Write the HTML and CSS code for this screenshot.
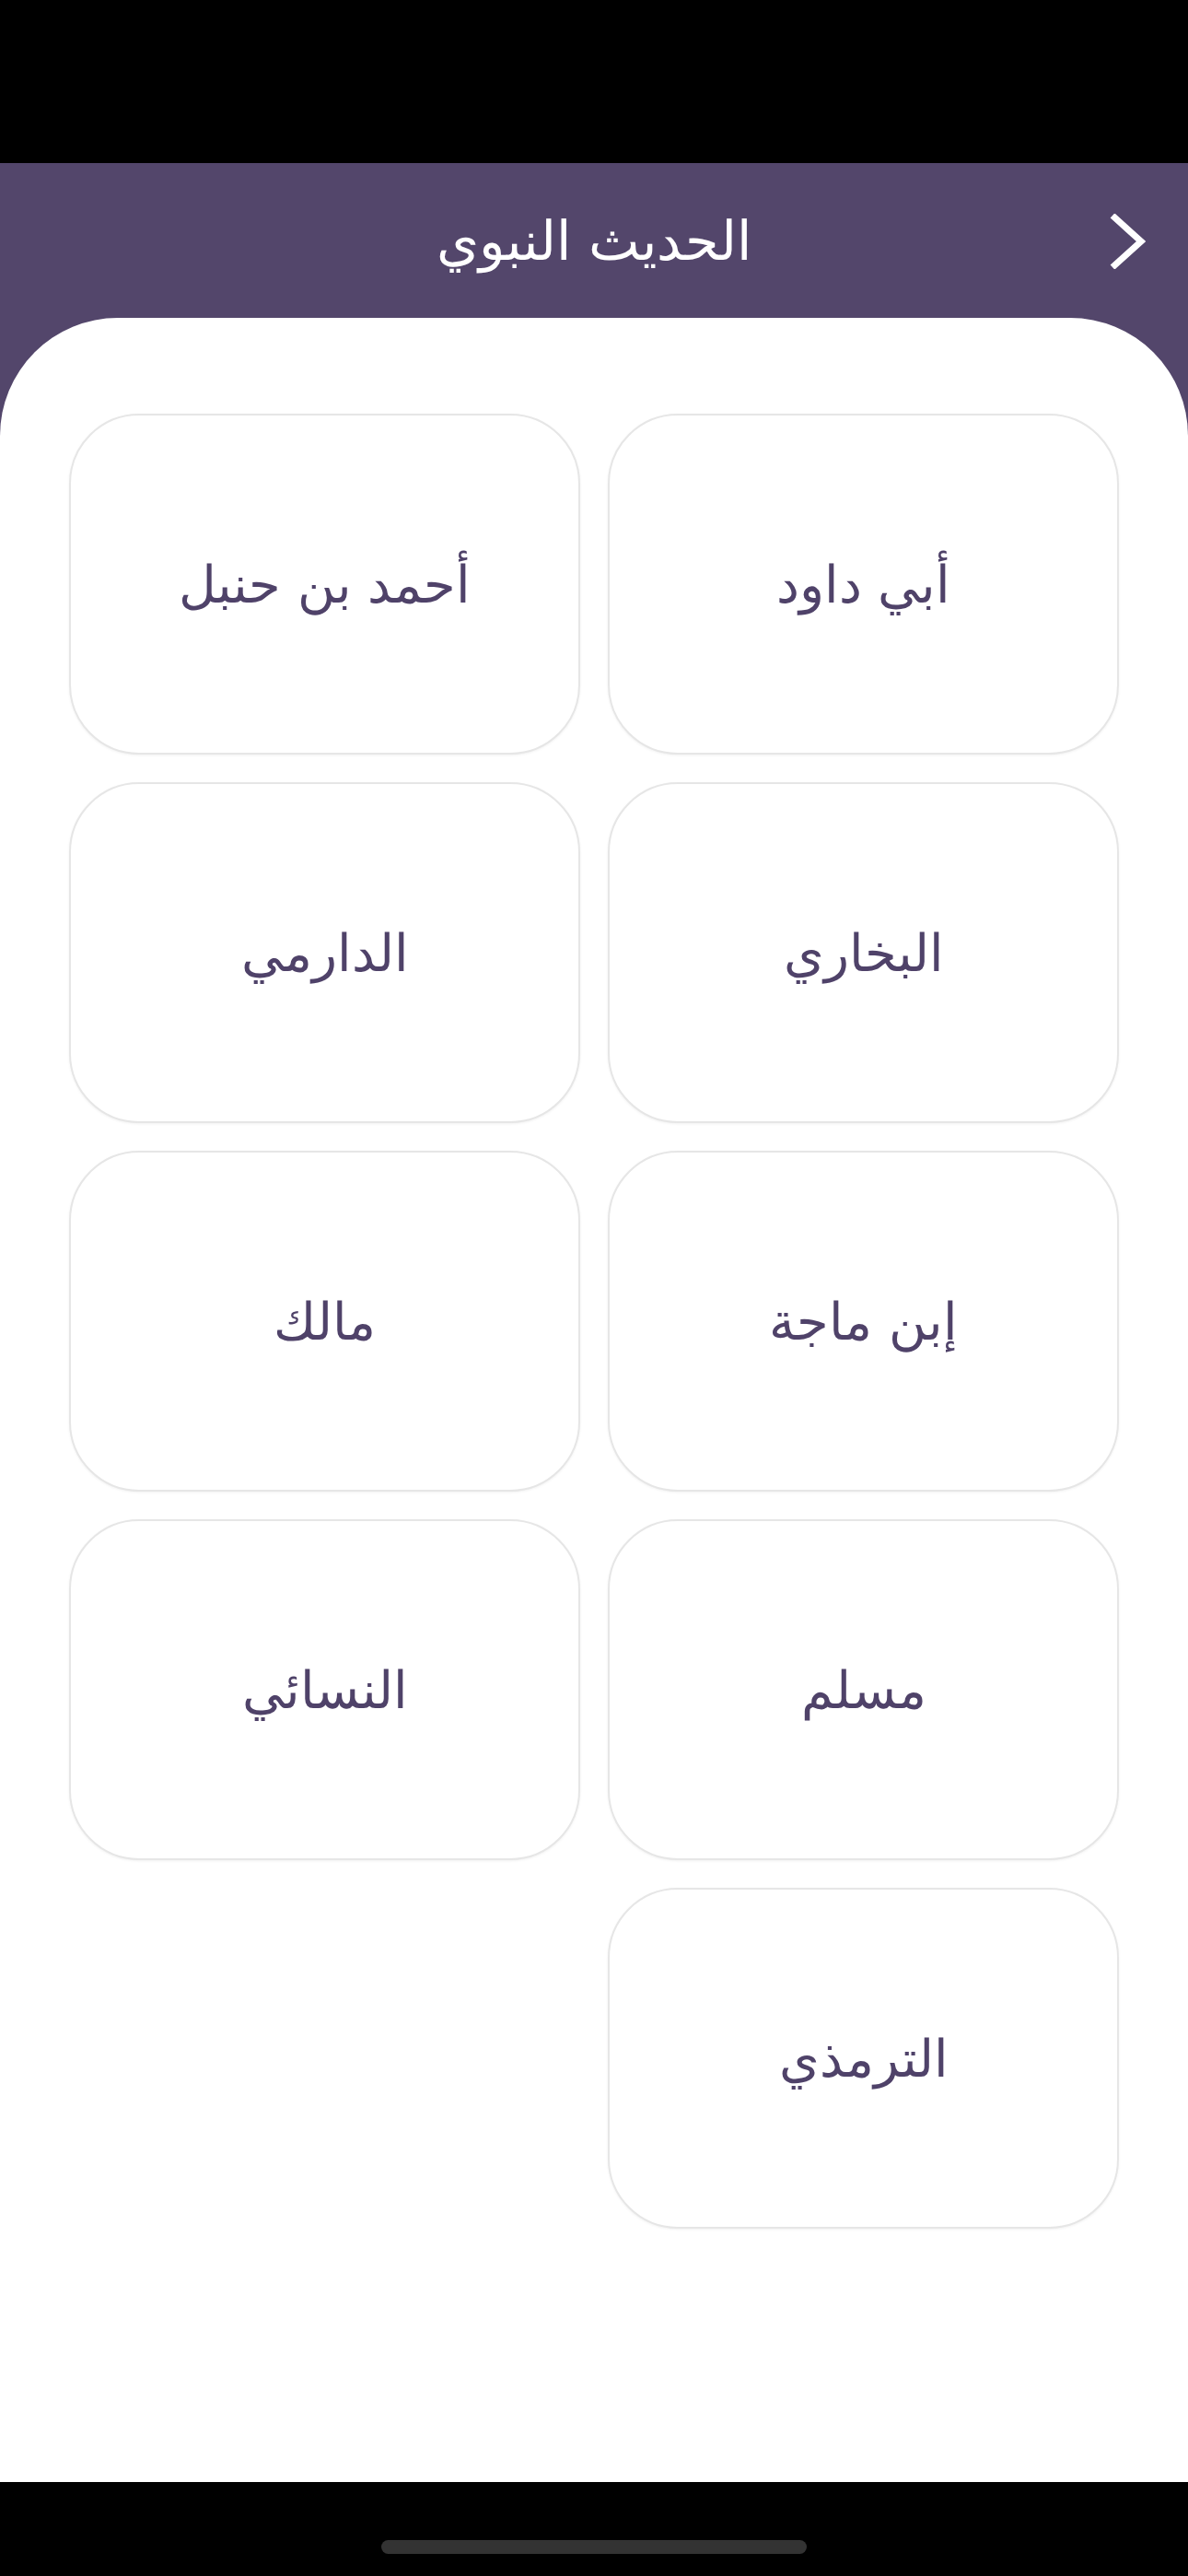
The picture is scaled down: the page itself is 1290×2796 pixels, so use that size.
FILE: index.html
```html
<!DOCTYPE html>
<html lang="ar" dir="rtl">
<head>
<meta charset="utf-8">
<title>الحديث النبوي</title>
<link rel="stylesheet" href="styles.css">
</head>
<body>
<div class="screen">
  <div class="status-bar"></div>
  <header class="app-header">
    <button class="back" aria-label="رجوع">
      <svg viewBox="0 0 40 60" width="40" height="60"><path d="M4 2 L35 30 L4 58" fill="none" stroke="#ffffff" stroke-width="7" stroke-linejoin="miter"/></svg>
    </button>
    <h1 class="title">الحديث النبوي</h1>
  </header>
  <main class="panel">
    <div class="grid">
      <div class="card">أبي داود</div>
      <div class="card">أحمد بن حنبل</div>
      <div class="card">البخاري</div>
      <div class="card">الدارمي</div>
      <div class="card">إبن ماجة</div>
      <div class="card">مالك</div>
      <div class="card">مسلم</div>
      <div class="card">النسائي</div>
      <div class="card">الترمذي</div>
    </div>
  </main>
  <footer class="home-bar"><div class="home-indicator"></div></footer>
</div>
</body>
</html>
```
FILE: styles.css
```css
* { box-sizing: border-box; }
html, body { margin: 0; padding: 0; }
body {
  width: 1290px;
  height: 2796px;
  background: #000;
  font-family: "DejaVu Sans", "Noto Sans", sans-serif;
}
.screen {
  display: flex;
  flex-direction: column;
  height: 2796px;
}
.status-bar {
  height: 177px;
  background: #000;
}
.app-header {
  height: 168px;
  background: #53466b;
  display: flex;
  align-items: center;
  justify-content: center;
  position: relative;
}
.title {
  margin: 0;
  color: #fff;
  font-weight: 300;
  font-size: 59px;
  line-height: 1;
}
.back {
  position: absolute;
  right: 46px;
  top: 55px;
  width: 40px;
  height: 60px;
  padding: 0;
  border: 0;
  background: none;
  display: block;
}
.back svg { display: block; }
.panel {
  flex: 1;
  background: #53466b;
  position: relative;
}
.panel::before {
  content: "";
  position: absolute;
  inset: 0;
  background: #fff;
  border-radius: 128px 128px 0 0;
}
.grid {
  position: relative;
  display: grid;
  grid-template-columns: 555px 555px;
  grid-auto-rows: 370px;
  gap: 30px;
  padding: 104px 75px 0;
}
.card {
  background: #fff;
  border: 2px solid #e6e6e6;
  border-radius: 76px;
  box-shadow: 0 1px 3px rgba(0,0,0,0.06);
  display: flex;
  align-items: center;
  justify-content: center;
  color: #4f4269;
  font-size: 56px;
  font-weight: 300;
}
.home-bar {
  height: 102px;
  background: #000;
  display: flex;
  justify-content: center;
  padding-top: 63px;
}
.home-indicator {
  width: 462px;
  height: 15px;
  border-radius: 8px;
  background: #333;
}
```
